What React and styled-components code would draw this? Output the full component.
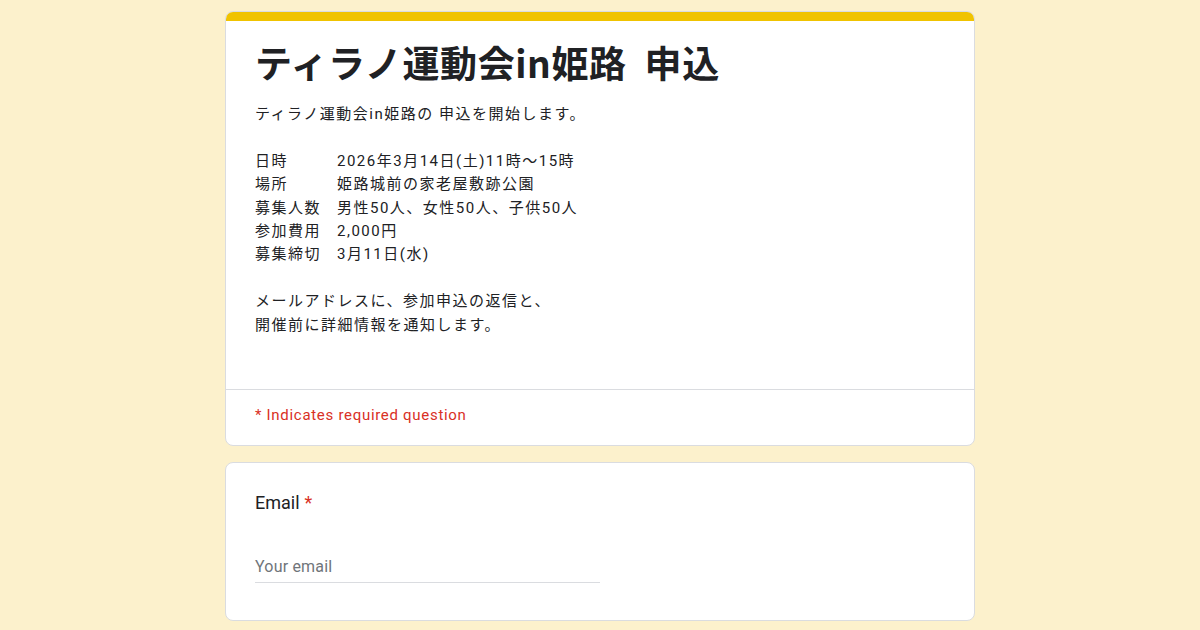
import React from 'react';
import styled, { createGlobalStyle } from 'styled-components';

const GlobalStyle = createGlobalStyle`
  html, body {
    margin: 0;
    padding: 0;
    background: #fcf1cc;
  }
  body {
    font-family: Roboto, "Noto Sans CJK JP", sans-serif;
    color: #202124;
  }
`;

const Page = styled.main`
  width: 750px;
  margin: 0 auto;
  padding-top: 11px;
  display: flex;
  flex-direction: column;
  gap: 16px;
`;

const Card = styled.section`
  background: #fff;
  border: 1px solid #dadce0;
  border-radius: 8px;
  overflow: hidden;
  box-sizing: border-box;
`;

const TopBar = styled.div`
  height: 10px;
  background: #f0c300;
  margin: -1px -1px 0;
`;

const Header = styled.div`
  padding: 17px 29px 52px;
`;

const Title = styled.h1`
  margin: 0;
  font-family: "Noto Sans CJK JP", sans-serif;
  font-size: 37px;
  font-weight: 700;
  line-height: 48px;
  letter-spacing: 0.6px;
  color: #202124;
  white-space: pre;
`;

const Description = styled.div`
  margin-top: 17px;
  font-size: 15px;
  line-height: 23.4px;
  letter-spacing: 1.5px;
  color: #202124;
`;

const Line = styled.div`
  min-height: 23.4px;
`;

const Info = styled.div`
  display: grid;
  grid-template-columns: 82px auto;
`;

const Required = styled.div`
  border-top: 1px solid #dadce0;
  padding: 15px 29px 20px;
  font-size: 15px;
  line-height: 20px;
  letter-spacing: 0.7px;
  color: #d93025;
`;

const Question = styled.div`
  padding: 28px 29px 37px;
`;

const Label = styled.div`
  font-size: 18px;
  line-height: 24px;
  color: #202124;
  span {
    color: #d93025;
    margin-left: 5px;
  }
`;

const Input = styled.div`
  margin-top: 42px;
  width: 345px;
  padding-bottom: 5px;
  border-bottom: 1px solid #dadce0;
  font-size: 16px;
  line-height: 20px;
  color: #70757a;
  letter-spacing: 0.2px;
`;

const info = [
  ['日時', '2026年3月14日(土)11時～15時'],
  ['場所', '姫路城前の家老屋敷跡公園'],
  ['募集人数', '男性50人、女性50人、子供50人'],
  ['参加費用', '2,000円'],
  ['募集締切', '3月11日(水)'],
];

const App = () => {
  return (
    <Page>
      <GlobalStyle />
      <Card>
        <TopBar />
        <Header>
          <Title>{'ティラノ運動会in姫路  申込'}</Title>
          <Description>
            <Line>ティラノ運動会in姫路の 申込を開始します。</Line>
            <Line />
            <Info>
              {info.map(([k, v]) => (
                <React.Fragment key={k}>
                  <Line>{k}</Line>
                  <Line>{v}</Line>
                </React.Fragment>
              ))}
            </Info>
            <Line />
            <Line>メールアドレスに、参加申込の返信と、</Line>
            <Line>開催前に詳細情報を通知します。</Line>
          </Description>
        </Header>
        <Required>* Indicates required question</Required>
      </Card>
      <Card>
        <Question>
          <Label>
            Email<span>*</span>
          </Label>
          <Input>Your email</Input>
        </Question>
      </Card>
    </Page>
  );
};

export default App;
